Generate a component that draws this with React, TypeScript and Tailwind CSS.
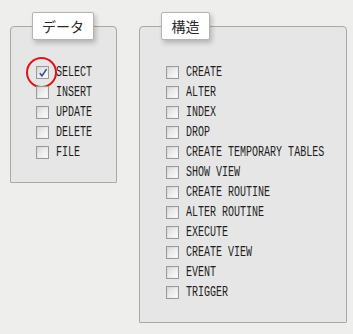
const dataItems = ["SELECT", "INSERT", "UPDATE", "DELETE", "FILE"]

const structItems = [
    "CREATE",
    "ALTER",
    "INDEX",
    "DROP",
    "CREATE TEMPORARY TABLES",
    "SHOW VIEW",
    "CREATE ROUTINE",
    "ALTER ROUTINE",
    "EXECUTE",
    "CREATE VIEW",
    "EVENT",
    "TRIGGER",
]

function CheckBox({checked, marked}: {checked?: boolean; marked?: boolean}) {
    return (
        <div className="relative w-[13px] h-[13px] shrink-0 border border-[#9a9a9a] bg-gradient-to-br from-[#d4d4d4] to-[#f8f8f8] p-[1px]">
            <div className="w-full h-full bg-gradient-to-br from-[#dcdcdc] via-[#eeeeee] to-[#fafafa]" />
            {checked && (
                <svg className="absolute left-[1px] top-[1px]" width="10" height="10" viewBox="0 0 10 10">
                    <path d="M2.2 5.6 L4 7.9 L8.2 1.6" fill="none" stroke="#3a4f9e" strokeWidth="1.7" strokeLinecap="round" strokeLinejoin="round" />
                </svg>
            )}
            {marked && (
                <div className="absolute left-[-11px] top-[-10px] w-[31px] h-[31px] rounded-full border-2 border-[#e0151b]" />
            )}
        </div>
    )
}

function Row({label, checked, marked}: {label: string; checked?: boolean; marked?: boolean}) {
    return (
        <div className="flex items-center h-[20px] gap-[7px]">
            <CheckBox checked={checked} marked={marked} />
            <span className="inline-block origin-left scale-x-[0.715] whitespace-nowrap text-[14px] leading-none text-[#1e1e1e] font-['Liberation_Mono',monospace]">
                {label}
            </span>
        </div>
    )
}

function Legend({title, width}: {title: string; width: string}) {
    return (
        <div className={`${width} h-[28px] mt-[-15px] ml-[21px] flex items-center justify-center bg-white border border-[#b4b4b4] rounded-[2px] shadow-[2px_3px_5px_rgba(0,0,0,0.22)] text-[14px] text-[#2a2a2a] font-['Noto_Sans_CJK_JP',sans-serif]`}>
            {title}
        </div>
    )
}

function App() {
    return (
        <div className="w-[353px] h-[334px] bg-[#eeeeec] flex items-start pt-[26px] pl-[10px] gap-[22px]">
            <div className="w-[107px] h-[157px] bg-[#e6e6e6] border border-[#a9a9a9] rounded-t-[4px] rounded-b-[1px]">
                <Legend title="データ" width="w-[62px]" />
                <div className="mt-[22px] pl-[25px] flex flex-col">
                    {dataItems.map((item, index) => (
                        <Row key={item} label={item} checked={index === 0} marked={index === 0} />
                    ))}
                </div>
            </div>
            <div className="w-[208px] h-[297px] bg-[#e6e6e6] border border-[#a9a9a9] rounded-t-[4px] rounded-b-[1px]">
                <Legend title="構造" width="w-[49px]" />
                <div className="mt-[22px] pl-[26px] flex flex-col">
                    {structItems.map((item) => (
                        <Row key={item} label={item} />
                    ))}
                </div>
            </div>
        </div>
    )
}

export default App
